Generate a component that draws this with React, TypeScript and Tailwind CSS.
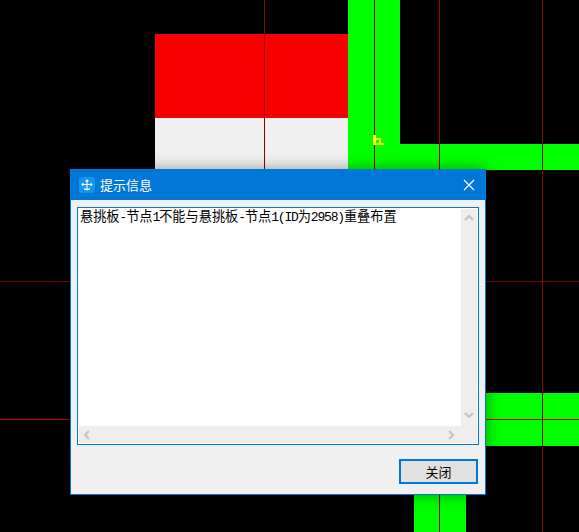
import React from 'react';

const Chevron: React.FC<{ points: string; className?: string }> = ({ points, className }) => (
  <svg className={className} width="10" height="10" viewBox="0 0 10 10" fill="none">
    <polyline points={points} stroke="#c4c4c4" strokeWidth="2.2" />
  </svg>
);

const Half: React.FC<{ children: React.ReactNode }> = ({ children }) => (
  <span className="text-[13px] tracking-[-1.2px] font-['Liberation_Mono',monospace]">{children}</span>
);

const App: React.FC = () => {
  return (
    <div className="relative w-[579px] h-[532px] overflow-hidden bg-black">
      {/* CAD canvas shapes */}
      <div className="absolute left-[155px] top-[34px] w-[193px] h-[84px] bg-[#f60000]"></div>
      <div className="absolute left-[155px] top-[118px] w-[193px] h-[60px] bg-[#f0f0f0]"></div>
      <div className="absolute left-[348px] top-0 w-[52px] h-[180px] bg-[#00ff00]"></div>
      <div className="absolute left-[348px] top-[144px] w-[231px] h-[26px] bg-[#00ff00]"></div>
      <div className="absolute left-[480px] top-[393px] w-[99px] h-[53px] bg-[#00ff00]"></div>
      <div className="absolute left-[414px] top-[480px] w-[52px] h-[52px] bg-[#00ff00]"></div>

      {/* Axis lines */}
      <div className="absolute left-[264px] top-0 w-px h-[300px] bg-[#8c0000]"></div>
      <div className="absolute left-[374px] top-0 w-px h-[300px] bg-[#a00000]"></div>
      <div className="absolute left-[439px] top-0 w-px h-[532px] bg-[#a00000]"></div>
      <div className="absolute left-[542px] top-0 w-px h-[532px] bg-[#8c0000]"></div>
      <div className="absolute left-0 top-[281px] w-[579px] h-px bg-[#800000]"></div>
      <div className="absolute left-0 top-[419px] w-[579px] h-px bg-[#c80000]"></div>

      {/* Yellow marker */}
      <svg className="absolute left-[373px] top-[135px]" width="11" height="11" viewBox="0 0 11 11" fill="none" shapeRendering="crispEdges">
        <path d="M0 0H3V3H8V8H11V10H0ZM3 5V8H6V5Z" fill="#ffff00" fillRule="evenodd" />
      </svg>

      {/* Dialog window */}
      <div className="absolute left-[70px] top-[169px] flex flex-col w-[416px] h-[326px] border border-[#0078d7] bg-[#f0f0f0] shadow-[0_0_14px_rgba(0,0,0,0.38)]">
        <div className="flex items-center h-[31px] -mt-px bg-[#0078d7] pl-[8px] pr-[10px] shrink-0">
          <svg width="16" height="16" viewBox="0 0 16 16" fill="none">
            <rect x="0" y="0" width="16" height="16" rx="3" fill="#1594f2" />
            <path d="M8 3V12.5M3 7.5H13M6.6 4.4L8 3L9.4 4.4M4.4 6.2L3 7.5L4.4 8.8M11.6 6.2L13 7.5L11.6 8.8M5 11.5Q8 14 11 11.5" stroke="#ffffff" strokeWidth="1.1" />
          </svg>
          <span className="ml-[5px] text-[13px] text-white font-['Noto_Sans_CJK_SC',sans-serif]">提示信息</span>
          <svg className="ml-auto" width="12" height="12" viewBox="0 0 12 12" fill="none">
            <path d="M1 1L11 11M11 1L1 11" stroke="#ffffff" strokeWidth="1.2" />
          </svg>
        </div>

        <div className="mt-[7px] mx-[6px] h-[238px] border border-[#0078d7] bg-white p-px flex shrink-0">
          <div className="flex-1 flex flex-col min-w-0">
            <div className="flex-1 pl-px text-[13.2px] leading-[13px] text-black whitespace-nowrap font-['Noto_Sans_CJK_SC',sans-serif]">
              悬挑板<Half>-</Half>节点<Half>1</Half>不能与悬挑板<Half>-</Half>节点<Half>1(ID</Half>为<Half>2958)</Half>重叠布置
            </div>
            <div className="flex items-center justify-between h-[17px] bg-[#eeeeee] px-[3px] shrink-0">
              <Chevron points="7,1 3,5 7,9" />
              <Chevron className="mr-[2px]" points="3,1 7,5 3,9" />
            </div>
          </div>
          <div className="flex flex-col items-center justify-between w-[16px] bg-[#eeeeee] pt-[4px] pb-[23px] shrink-0">
            <Chevron points="1,7 5,3 9,7" />
            <Chevron points="1,3 5,7 9,3" />
          </div>
        </div>

        <div className="flex justify-end mt-[14px] pr-[7px]">
          <button className="w-[79px] h-[25px] border-2 border-[#0078d7] bg-[#e1e1e1] text-[13px] leading-none text-black font-['Noto_Sans_CJK_SC',sans-serif]">
            关闭
          </button>
        </div>
      </div>
    </div>
  );
};

export default App;
